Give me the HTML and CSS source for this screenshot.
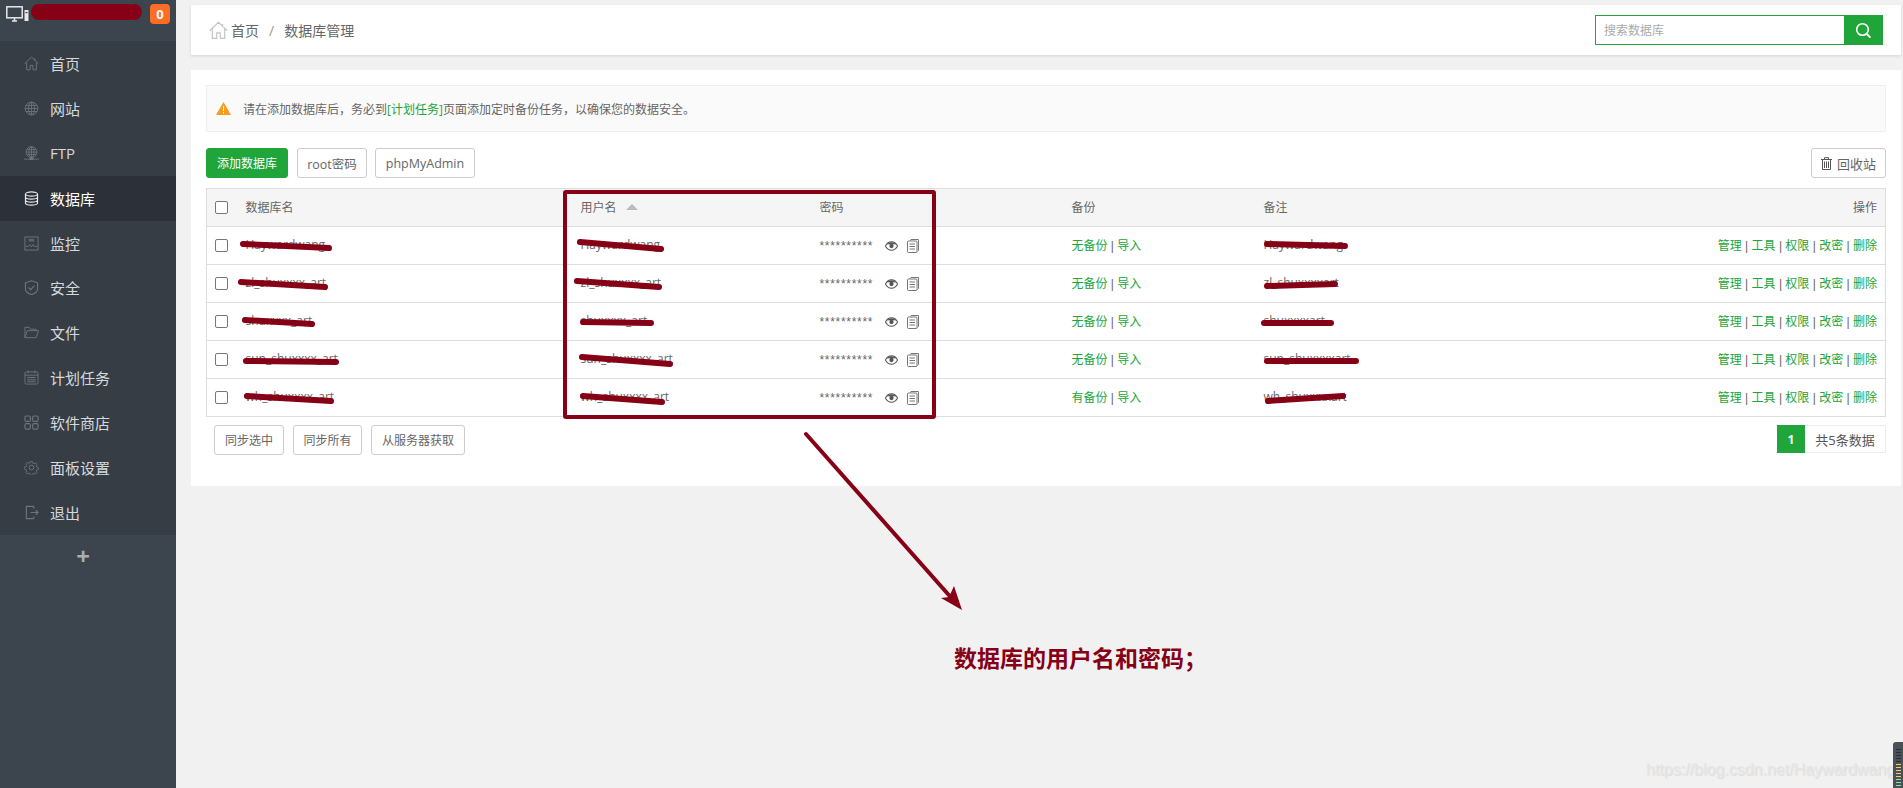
FILE: index.html
```html
<!DOCTYPE html>
<html lang="zh-CN">
<head>
<meta charset="utf-8">
<title>数据库管理</title>
<link rel="stylesheet" href="styles.css">
</head>
<body>
<svg class="sprite" width="0" height="0" aria-hidden="true">
  <symbol id="i-home" viewBox="0 0 16 16"><path d="M.6 8.200 8 1.200l7.400 7M2.800 6.800v7.900h3.700V10h3v4.700h3.700V6.800M11.500 2.500v2.600" fill="none" stroke="currentColor"/></symbol>
  <symbol id="i-globe" viewBox="0 0 16 16"><g fill="none" stroke="currentColor" stroke-width=".9"><circle cx="8" cy="8" r="6.800"/><ellipse cx="8" cy="8" rx="3.200" ry="6.800"/><path d="M8 1.200v13.600M1.200 8h13.600M2 4.800h12M2 11.200h12"/></g></symbol>
  <symbol id="i-ftp" viewBox="0 0 16 16"><g fill="none" stroke="currentColor" stroke-width=".9"><circle cx="8" cy="6.500" r="5.800"/><ellipse cx="8" cy="6.500" rx="2.800" ry="5.800"/><path d="M8 .7v11.600M2.200 6.500h11.600M3 3.800h10M3 9.200h10M0 14h16"/></g><rect x="6" y="12.500" width="4" height="2.500" fill="currentColor"/></symbol>
  <symbol id="i-db" viewBox="0 0 16 16"><g fill="none" stroke="currentColor" stroke-width="1.300"><ellipse cx="8" cy="3.200" rx="6.400" ry="2.300"/><path d="M1.600 3.200v9.600c0 1.300 2.900 2.300 6.400 2.300s6.400-1 6.400-2.300V3.200M1.600 6.400c0 1.300 2.900 2.300 6.400 2.300s6.400-1 6.400-2.300M1.600 9.600c0 1.300 2.900 2.300 6.400 2.300s6.400-1 6.400-2.300"/></g></symbol>
  <symbol id="i-mon" viewBox="0 0 16 16"><rect x="1" y="1" width="14" height="14" fill="none" stroke="currentColor"/><path d="M1.500 11H5l1.500-2 1.500 2.500L9.500 9l1 2h4" fill="none" stroke="currentColor" stroke-width=".9"/><rect x="5" y="3" width="6" height="3" fill="currentColor" opacity=".7"/></symbol>
  <symbol id="i-shield" viewBox="0 0 16 16"><path d="M8 .8 14.500 3v6.500c0 3-3 4.800-6.500 6-3.500-1.200-6.500-3-6.500-6V3Z" fill="none" stroke="currentColor" stroke-width="1.200"/><path d="m4.800 8 2.400 2.400 4-4.400" fill="none" stroke="currentColor" stroke-width="1.200"/></symbol>
  <symbol id="i-folder" viewBox="0 0 16 16"><path d="M1 13.500V2.500h4.500l1.500 2h6v1.500M1 13.500h12L15.500 6H3.500Z" fill="none" stroke="currentColor" stroke-linejoin="round"/></symbol>
  <symbol id="i-cal" viewBox="0 0 16 16"><rect x="1" y="2" width="14" height="13" rx="1.500" fill="none" stroke="currentColor"/><path d="M1 5.500h14M4.500.5v3M11.500.5v3" stroke="currentColor" fill="none"/><path d="M3.500 7.500h9v1h-9zM3.500 9.800h9v1h-9zM3.500 12h9v1h-9z" fill="currentColor"/></symbol>
  <symbol id="i-apps" viewBox="0 0 16 16"><g fill="none" stroke="currentColor" stroke-width="1.200"><rect x="1" y="1" width="5.800" height="5.800" rx="1.500"/><rect x="9.200" y="1" width="5.800" height="5.800" rx="1.500"/><rect x="1" y="9.200" width="5.800" height="5.800" rx="1.500"/><rect x="9.200" y="9.200" width="5.800" height="5.800" rx="1.500"/></g></symbol>
  <symbol id="i-gear" viewBox="0 0 16 16"><g fill="none" stroke="currentColor"><circle cx="8" cy="8" r="2.500"/><path d="M6.700 1h2.600l.4 2 1.300.6 1.800-1.100 1.800 1.800-1.100 1.800.6 1.300 2 .4v2.600l-2 .4-.6 1.300 1.100 1.800-1.800 1.800-1.800-1.100-1.300.6-.4 2H6.700l-.4-2-1.300-.6-1.800 1.100-1.800-1.800 1.100-1.800-.6-1.300-2-.4V7.200l2-.4.600-1.300-1.100-1.800 1.800-1.800 1.800 1.100 1.300-.6Z" transform="translate(.8 .8) scale(.9)"/></g></symbol>
  <symbol id="i-exit" viewBox="0 0 16 16"><path d="M10.500 1.500h-8v13h8M10.500 1.500V4M10.500 14.500V12M7 8h8M12.500 5.500 15 8l-2.500 2.500" fill="none" stroke="currentColor" stroke-width="1.200"/></symbol>
  <symbol id="i-eye" viewBox="0 0 14 10"><path d="M.5 5C2 2 4.300.5 7 .5S12 2 13.500 5C12 8 9.700 9.500 7 9.500S2 8 .5 5Z" fill="none" stroke="currentColor" stroke-width="1.100"/><path d="M2 3.500C3.500 1.800 5 1 7 1s3.500.8 5 2.500L9.500 3h-5Z" fill="currentColor"/><circle cx="7" cy="5" r="2.300" fill="currentColor"/></symbol>
  <symbol id="i-copy" viewBox="0 0 12 14"><path d="M3.500 1.500 4 .5h7.500v11l-1 1" fill="none" stroke="currentColor"/><rect x=".5" y="2" width="9.500" height="11.500" rx="1" fill="none" stroke="currentColor"/><path d="M2.500 5h5.500M2.500 7.500h5.500M2.500 10h5.500" stroke="currentColor" fill="none"/></symbol>
</svg>

<div class="shell">
  <aside class="sidebar">
    <div class="side-top">
      <svg class="pc" width="23" height="16" viewBox="0 0 23 16"><rect x=".8" y=".8" width="15.400" height="11" fill="none" stroke="currentColor" stroke-width="1.500"/><path d="M6 15h5M8.500 12v3" stroke="currentColor" stroke-width="1.500"/><rect x="18.500" y="4" width="4" height="11" fill="currentColor"/><rect x="19.500" y="6" width="2" height="1.200" fill="#3c444d"/></svg>
      <span class="name-mask"></span>
      <span class="badge">0</span>
    </div>
    <nav class="menu">
      <a class="item"><svg class="mi"><use href="#i-home"/></svg>首页</a>
      <a class="item"><svg class="mi"><use href="#i-globe"/></svg>网站</a>
      <a class="item"><svg class="mi"><use href="#i-ftp"/></svg>FTP</a>
      <a class="item active"><svg class="mi"><use href="#i-db"/></svg>数据库</a>
      <a class="item"><svg class="mi"><use href="#i-mon"/></svg>监控</a>
      <a class="item"><svg class="mi"><use href="#i-shield"/></svg>安全</a>
      <a class="item"><svg class="mi"><use href="#i-folder"/></svg>文件</a>
      <a class="item"><svg class="mi"><use href="#i-cal"/></svg>计划任务</a>
      <a class="item"><svg class="mi"><use href="#i-apps"/></svg>软件商店</a>
      <a class="item"><svg class="mi"><use href="#i-gear"/></svg>面板设置</a>
      <a class="item"><svg class="mi"><use href="#i-exit"/></svg>退出</a>
    </nav>
    <div class="plus">+</div>
  </aside>

  <main class="main">
    <header class="topcard">
      <div class="crumb">
        <svg class="crumb-home"><use href="#i-home"/></svg>
        <span>首页</span><span class="crumb-sep">/</span><span>数据库管理</span>
      </div>
      <form class="search">
        <input class="search-input" type="text" placeholder="搜索数据库">
        <button class="search-btn" type="button" aria-label="搜索">
          <svg width="17" height="17" viewBox="0 0 17 17"><circle cx="7.500" cy="7.500" r="5.800" fill="none" stroke="#fff" stroke-width="1.500"/><path d="m11.800 12 3.700 3.700" stroke="#fff" stroke-width="1.800"/></svg>
        </button>
      </form>
    </header>

    <section class="card">
      <div class="alert">
        <svg class="warn" width="15" height="13" viewBox="0 0 15 13"><path d="M7.500 0 15 13H0Z" fill="#f89c1c"/><path d="M7 4h1v5H7zM7 10h1v1.500H7z" fill="#fff"/></svg>
        <span>请在添加数据库后，务必到<a class="link">[计划任务]</a>页面添加定时备份任务，以确保您的数据安全。</span>
      </div>

      <div class="toolbar">
        <button class="btn btn-green">添加数据库</button>
        <button class="btn btn-root">root密码</button>
        <button class="btn btn-pma">phpMyAdmin</button>
        <button class="btn btn-bin">
          <svg width="11" height="13" viewBox="0 0 11 13"><path d="M0 2.500h11M3.500 2.500V.7h4v1.800M1.500 2.500v10h8v-10M3.500 4.500v6.500M5.500 4.500v6.500M7.500 4.500v6.500" fill="none" stroke="#555"/></svg>
          回收站
        </button>
      </div>

      <table class="grid">
        <colgroup><col class="c-check"><col class="c-name"><col class="c-user"><col class="c-pass"><col class="c-backup"><col class="c-note"><col></colgroup>
        <thead>
          <tr><th><span class="cb"></span></th><th>数据库名</th><th>用户名 <i class="sort"></i></th><th>密码</th><th>备份</th><th>备注</th><th class="right">操作</th></tr>
        </thead>
        <tbody>
          <tr><td><span class="cb"></span></td><td>Haywardwang</td><td>Haywardwang</td><td><span class="pw">**********</span><svg class="eye"><use href="#i-eye"/></svg><svg class="copy"><use href="#i-copy"/></svg></td><td class="tight"><a class="link">无备份</a> | <a class="link">导入</a></td><td>Haywardwang</td><td class="right tight"><a class="link">管理</a> | <a class="link">工具</a> | <a class="link">权限</a> | <a class="link">改密</a> | <a class="link">删除</a></td></tr>
          <tr><td><span class="cb"></span></td><td>zl_shuxxxx_art</td><td>zl_shuxxxx_art</td><td><span class="pw">**********</span><svg class="eye"><use href="#i-eye"/></svg><svg class="copy"><use href="#i-copy"/></svg></td><td class="tight"><a class="link">无备份</a> | <a class="link">导入</a></td><td>zl_shuxxxxart</td><td class="right tight"><a class="link">管理</a> | <a class="link">工具</a> | <a class="link">权限</a> | <a class="link">改密</a> | <a class="link">删除</a></td></tr>
          <tr><td><span class="cb"></span></td><td>shuxxxx_art</td><td>shuxxxx_art</td><td><span class="pw">**********</span><svg class="eye"><use href="#i-eye"/></svg><svg class="copy"><use href="#i-copy"/></svg></td><td class="tight"><a class="link">无备份</a> | <a class="link">导入</a></td><td>shuxxxxart</td><td class="right tight"><a class="link">管理</a> | <a class="link">工具</a> | <a class="link">权限</a> | <a class="link">改密</a> | <a class="link">删除</a></td></tr>
          <tr><td><span class="cb"></span></td><td>sun_shuxxxx_art</td><td>sun_shuxxxx_art</td><td><span class="pw">**********</span><svg class="eye"><use href="#i-eye"/></svg><svg class="copy"><use href="#i-copy"/></svg></td><td class="tight"><a class="link">无备份</a> | <a class="link">导入</a></td><td>sun_shuxxxxart</td><td class="right tight"><a class="link">管理</a> | <a class="link">工具</a> | <a class="link">权限</a> | <a class="link">改密</a> | <a class="link">删除</a></td></tr>
          <tr><td><span class="cb"></span></td><td>wh_shuxxxx_art</td><td>wh_shuxxxx_art</td><td><span class="pw">**********</span><svg class="eye"><use href="#i-eye"/></svg><svg class="copy"><use href="#i-copy"/></svg></td><td class="tight"><a class="link">有备份</a> | <a class="link">导入</a></td><td>wh_shuxxxxart</td><td class="right tight"><a class="link">管理</a> | <a class="link">工具</a> | <a class="link">权限</a> | <a class="link">改密</a> | <a class="link">删除</a></td></tr>
        </tbody>
      </table>

      <div class="foot">
        <div class="foot-btns">
          <button class="btn btn-s1">同步选中</button>
          <button class="btn btn-s2">同步所有</button>
          <button class="btn btn-s3">从服务器获取</button>
        </div>
        <div class="pager"><span class="page-cur">1</span><span class="page-total">共5条数据</span></div>
      </div>
    </section>
  </main>
</div>

<svg class="annot" width="1903" height="788" viewBox="0 0 1903 788" aria-hidden="true">
  <rect class="box" x="565" y="192" width="369" height="225" rx="1"/>
  <g class="scribble">
    <path d="M243 244 329 248M241 282 325 287M245 320 312 324M246 361 336 362M247 396 331 401"/>
    <path d="M580 242 661 249M577 281 659 287M583 322 651 323M582 357 670 364M583 396 662 402"/>
    <path d="M1267 244 1345 246M1267 286 1335 284M1264 323 1331 323M1267 361 1356 361M1268 401 1343 396"/>
  </g>
  <path class="arrow-line" d="M806 434 955 602"/>
  <path class="arrow-head" d="M962 610 941 598 949 597 954 586Z"/>
</svg>
<p class="caption">数据库的用户名和密码；</p>
<span class="watermark">https://blog.csdn.net/Haywardwang</span>
<div class="meter"></div>
</body>
</html>
```

FILE: styles.css
```css
* { box-sizing: border-box; }
html, body { margin: 0; height: 100%; overflow: hidden; }
body {
  background: #f1f1f1;
  color: #666;
  font: 12px "Open Sans", "Noto Sans CJK SC", sans-serif;
}
.sprite { position: absolute; }
.shell { display: flex; height: 788px; }

/* sidebar */
.sidebar { width: 176px; flex: none; background: #3c444d; display: flex; flex-direction: column; }
.side-top { height: 41px; display: flex; align-items: flex-start; padding: 4px 6px 0 6px; }
.pc { color: #e6e8ea; margin-top: 2px; flex: none; }
.name-mask { width: 111px; height: 16px; border-radius: 8px; background: #860016; margin-left: 2px; }
.badge {
  width: 20px; height: 20px; margin-left: 8px; border-radius: 4px;
  background: #ff6c23; color: #fff; font-weight: bold; font-size: 13px;
  display: flex; align-items: center; justify-content: center;
}
.menu { background: #363d45; }
.item {
  height: 44.9px; display: flex; align-items: center; gap: 11px;
  padding-left: 24px; font-size: 15px; color: #d6d9dc;
}
.mi { width: 15px; height: 15px; color: #6e757c; flex: none; }
.item.active { background: #2c3038; color: #fff; }
.item.active .mi { color: #e8e8e8; }
.plus { padding-right: 10px; text-align: center; color: #a8aeb4; font-size: 24px; font-weight: bold; line-height: 24px; margin-top: 9px; }

/* main */
.main { flex: 1; min-width: 0; padding: 5px 2px 0 15px; }
.topcard {
  height: 50px; background: #fff; box-shadow: 0 1px 3px rgba(0,0,0,.12);
  display: flex; align-items: center; justify-content: space-between; padding: 0 18px 0 18px;
}
.crumb { display: flex; align-items: center; font-size: 14px; color: #666; }
.crumb-home { width: 19px; height: 19px; color: #c4c4c4; margin-right: 3px; }
.crumb-sep { margin: 0 10px; color: #999; }
.search { display: flex; height: 30px; }
.search-input {
  width: 249px; height: 30px; border: 1px solid #20a53a; border-right: 0; padding: 1px 8px 0;
  font: inherit; font-size: 12px; outline: 0; color: #666;
}
.search-input::placeholder { color: #aaa; opacity: 1; }
.search-btn {
  width: 39px; height: 30px; border: 0; padding: 0; background: #20a53a;
  display: flex; align-items: center; justify-content: center;
}

.card { margin-top: 15px; height: 416px; background: #fff; padding: 15px; }
.alert {
  height: 47px; background: #fafafa; border: 1px solid #eee;
  display: flex; align-items: center; padding-left: 9px; gap: 12px;
}
.link { color: #20a53a; }

.toolbar { display: flex; gap: 8px; margin-top: 16px; height: 30px; }
.btn {
  height: 30px; padding: 0; background: #fff; border: 1px solid #ccc; border-radius: 3px;
  font: inherit; color: #666; font-size: 12px;
}
.btn-green { width: 82px; background: #20a53a; border-color: #20a53a; color: #fff; margin-right: 1px; }
.btn-root { width: 70px; font-size: 12.5px; }
.btn-pma { width: 100px; font-size: 12.5px; }
.btn-bin {
  width: 75px; margin-left: auto; font-size: 13px;
  display: flex; align-items: center; justify-content: center; gap: 5px;
}

/* table */
.grid { width: 100%; margin-top: 10px; border-collapse: collapse; table-layout: fixed; border: 1px solid #ddd; }
.c-check { width: 31px; }
.c-name { width: 335px; }
.c-user { width: 239px; }
.c-pass { width: 252px; }
.c-backup { width: 192px; }
.c-note { width: 300px; }
.grid th, .grid td {
  height: 38px; padding: 0 8px 2px; text-align: left; font-weight: normal;
  border-bottom: 1px solid #ddd; white-space: nowrap; overflow: hidden;
}
.grid th { background: #f5f5f5; }
.grid .right { text-align: right; }
.grid .tight { font-family: "Liberation Sans", "Noto Sans CJK SC", sans-serif; }
.cb { display: block; width: 13px; height: 13px; margin-top: 2px; border: 1px solid #777; border-radius: 2px; background: #fff; }
.sort {
  display: inline-block; width: 0; height: 0; margin-left: 6px; vertical-align: 2px;
  border-left: 6px solid transparent; border-right: 6px solid transparent; border-bottom: 6px solid #bbb;
}
.pw {
  display: inline-block; width: 65px; vertical-align: middle;
  font-family: "Liberation Sans", sans-serif; letter-spacing: .7px;
}
.eye, .copy { vertical-align: middle; color: #555; }
.eye { width: 13px; height: 10px; }
.copy { width: 12px; height: 14px; margin-left: 9px; color: #777; }

/* footer */
.foot { display: flex; justify-content: space-between; margin-top: 8px; padding: 0 0 0 8px; }
.foot-btns { display: flex; gap: 9px; }
.btn-s1 { width: 70px; }
.btn-s2 { width: 69px; }
.btn-s3 { width: 94px; }
.pager { display: flex; height: 28px; }
.page-cur {
  width: 28px; background: #20a53a; color: #fff; font-weight: bold;
  display: flex; align-items: center; justify-content: center;
}
.page-total {
  width: 81px; border: 1px solid #eee; border-left: 0; color: #555; font-size: 13px;
  display: flex; align-items: center; justify-content: center;
}

/* annotations laid over the screenshot */
.annot { position: absolute; left: 0; top: 0; pointer-events: none; }
.box { fill: none; stroke: #860016; stroke-width: 4; }
.scribble path { fill: none; stroke: #860016; stroke-width: 6; stroke-linecap: round; }
.arrow-line { fill: none; stroke: #860016; stroke-width: 4; stroke-linecap: round; }
.arrow-head { fill: #860016; }
.caption {
  position: absolute; left: 954px; top: 641px; margin: 0;
  font: bold 23px/32px "Noto Sans CJK SC", sans-serif; color: #860016; white-space: nowrap;
}
.watermark {
  position: absolute; left: 1646px; top: 759px; font: 16px/22px "Liberation Sans", sans-serif;
  color: #e6e6e6; text-shadow: 1px 1px 1px #dcdcdc; white-space: nowrap;
}
.meter {
  position: absolute; left: 1893px; top: 742px; width: 10px; height: 46px;
  border-radius: 3px 0 0 0; background-color: #4a5058;
  background-image:
    repeating-linear-gradient(to bottom, transparent 0 1px, #4a5058 1px 3px),
    linear-gradient(to bottom, #2c3036 0 14px, #e8d070 14px 30px, #90e0a0 30px);
  background-position: 3px 7px; background-size: 5px 100%; background-repeat: no-repeat;
}
```
